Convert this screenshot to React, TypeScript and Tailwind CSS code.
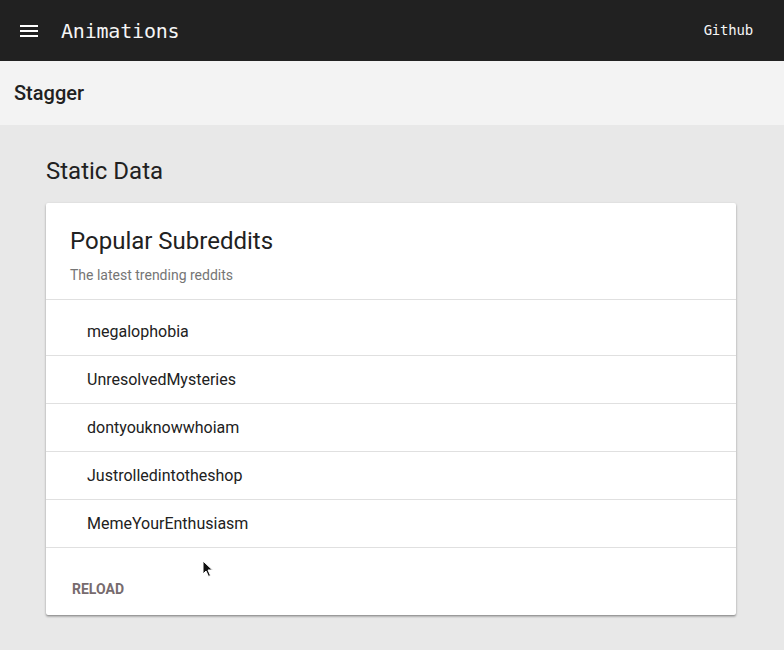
import React from 'react';

const subreddits = [
    'megalophobia',
    'UnresolvedMysteries',
    'dontyouknowwhoiam',
    'Justrolledintotheshop',
    'MemeYourEnthusiasm',
];

const MenuIcon = () => (
    <svg width="18" height="12" viewBox="0 0 18 12" fill="#ffffff">
        <rect x="0" y="0" width="18" height="2" />
        <rect x="0" y="5" width="18" height="2" />
        <rect x="0" y="10" width="18" height="2" />
    </svg>
);

const Cursor = () => (
    <svg width="12" height="18" viewBox="0 0 12 18" className="absolute left-[202px] top-[560px] pointer-events-none">
        <path d="M1 1 L1 14 L4 11 L6.5 16.5 L8.5 15.5 L6 10 L10.5 10 Z" fill="#111111" stroke="#ffffff" strokeWidth="1" />
    </svg>
);

const App = () => {
    return (
        <div className="relative min-h-screen bg-[#e8e8e8] font-['Roboto',sans-serif]">
            {/* Toolbar */}
            <div className="h-[61px] bg-[#212121] flex items-center pl-5 pr-[31px]">
                <MenuIcon />
                <span className="ml-[23px] text-[20px] text-[#f5f5f5] font-['DejaVu_Sans_Mono',monospace] tracking-[-0.2px]">
                    Animations
                </span>
                <span className="ml-auto text-[14px] text-[#f5f5f5] font-['DejaVu_Sans_Mono',monospace] tracking-[-0.2px]">
                    Github
                </span>
            </div>

            {/* Page header */}
            <div className="h-16 bg-[#f3f3f3] flex items-center px-[14px]">
                <h1 className="text-[20px] font-medium text-[#212121]">Stagger</h1>
            </div>

            {/* Content */}
            <div className="pl-[46px] pt-[32px]">
                <h2 className="text-[24px] leading-[28px] text-[#212121] mb-[18px]">Static Data</h2>

                <div className="w-[690px] bg-white rounded-[2px] shadow-[0_1px_3px_rgba(0,0,0,0.2),0_2px_2px_rgba(0,0,0,0.14),0_1px_1px_rgba(0,0,0,0.12)]">
                    <div className="h-[97px] px-6 pt-[22px] border-b border-[#e0e0e0]">
                        <div className="text-[24px] leading-[32px] text-[#212121]">Popular Subreddits</div>
                        <div className="mt-[10px] text-[14px] leading-[16px] text-[#757575]">The latest trending reddits</div>
                    </div>

                    <ul className="pt-2">
                        {subreddits.map((name) => (
                            <li key={name} className="h-12 flex items-center pl-[41px] border-b border-[#e0e0e0] text-[16px] text-[#212121]">
                                {name}
                            </li>
                        ))}
                    </ul>

                    <div className="h-[67px] flex items-end pb-[18px] pl-[26px]">
                        <button className="text-[14px] leading-[16px] font-bold uppercase text-[#776b6e]">Reload</button>
                    </div>
                </div>
            </div>

            <Cursor />
        </div>
    );
};

export default App;
